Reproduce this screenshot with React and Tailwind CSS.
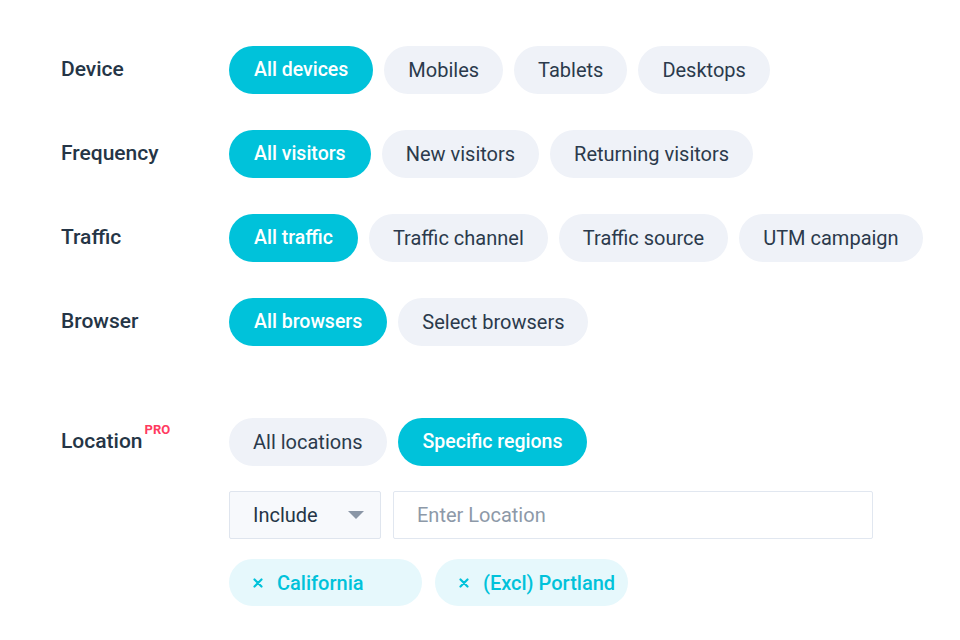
import React from "react";

const font = { fontFamily: "Roboto, 'Noto Sans', sans-serif" };

function Pill({ active, children }) {
  return (
    <div
      className={
        "h-[48px] rounded-full flex items-center whitespace-nowrap " +
        (active
          ? "px-[25px] bg-[#00c2da] text-white font-medium text-[19.5px]"
          : "px-[24px] bg-[#eff2f8] text-[#2b3a4c] text-[20px]")
      }
    >
      {children}
    </div>
  );
}

function Row({ label, items, active }) {
  return (
    <div className="flex items-center h-[48px]">
      <div className="w-[168px] text-[21px] font-medium text-[#253546]">{label}</div>
      <div className="flex gap-[11px]">
        {items.map((it, i) => (
          <Pill key={it} active={i === active}>
            {it}
          </Pill>
        ))}
      </div>
    </div>
  );
}

function Tag({ children }) {
  return (
    <div className="w-[193px] h-[47px] pl-[24px] rounded-full bg-[#e6f8fc] text-[#00c2da] flex items-center gap-[14px] text-[20px] font-medium whitespace-nowrap">
      <svg width="10" height="10" viewBox="0 0 10 10">
        <path d="M1.5 1.5 L8.5 8.5 M8.5 1.5 L1.5 8.5" stroke="#00c2da" strokeWidth="2.2" strokeLinecap="round" />
      </svg>
      <span>{children}</span>
    </div>
  );
}

export default function App() {
  return (
    <div className="w-[960px] h-[640px] bg-white pl-[61px] pt-[46px]" style={font}>
      <div className="flex flex-col gap-[36px]">
        <Row label="Device" items={["All devices", "Mobiles", "Tablets", "Desktops"]} active={0} />
        <Row label="Frequency" items={["All visitors", "New visitors", "Returning visitors"]} active={0} />
        <Row label="Traffic" items={["All traffic", "Traffic channel", "Traffic source", "UTM campaign"]} active={0} />
        <Row label="Browser" items={["All browsers", "Select browsers"]} active={0} />
      </div>
      <div className="flex mt-[72px]">
        <div className="w-[168px] h-[48px] flex items-center">
          <div className="relative text-[21px] font-medium text-[#253546]">
            Location
            <span className="absolute left-[calc(100%+2px)] top-[-6px] text-[13px] font-bold text-[#ff3b5f]">PRO</span>
          </div>
        </div>
        <div className="flex flex-col">
          <div className="flex gap-[11px]">
            <Pill active={false}>All locations</Pill>
            <Pill active={true}>Specific regions</Pill>
          </div>
          <div className="flex gap-[12px] mt-[25px]">
            <div className="w-[152px] h-[48px] bg-[#f7f9fc] border border-[#dfe5ee] rounded-[2px] flex items-center justify-between pl-[23px] pr-[16px] text-[20px] text-[#253546]">
              <span>Include</span>
              <svg width="16" height="8" viewBox="0 0 16 8">
                <path d="M0 0 L16 0 L8 8 Z" fill="#8a96a6" />
              </svg>
            </div>
            <div className="w-[480px] h-[48px] bg-white border border-[#e1e7f0] rounded-[2px] flex items-center pl-[23px] text-[20px] text-[#8d99a8]">
              Enter Location
            </div>
          </div>
          <div className="flex gap-[13px] mt-[20px]">
            <Tag>California</Tag>
            <Tag>(Excl) Portland</Tag>
          </div>
        </div>
      </div>
    </div>
  );
}
